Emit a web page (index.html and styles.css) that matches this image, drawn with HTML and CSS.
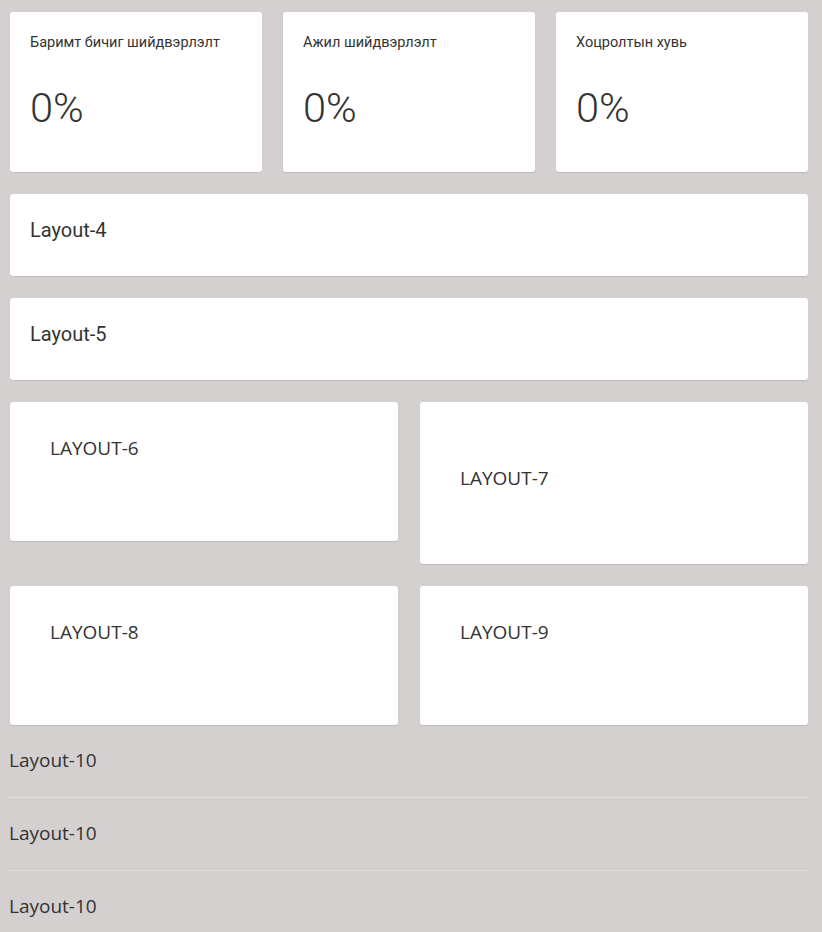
FILE: index.html
```html
<!DOCTYPE html>
<html lang="mn">
<head>
<meta charset="utf-8">
<title>Dashboard</title>
<link rel="stylesheet" href="styles.css">
</head>
<body>
<main class="page">
  <section class="stats">
    <div class="card stat">
      <div class="stat-title">Баримт бичиг шийдвэрлэлт</div>
      <div class="stat-value">0%</div>
    </div>
    <div class="card stat">
      <div class="stat-title">Ажил шийдвэрлэлт</div>
      <div class="stat-value">0%</div>
    </div>
    <div class="card stat">
      <div class="stat-title">Хоцролтын хувь</div>
      <div class="stat-value">0%</div>
    </div>
  </section>

  <section class="card wide">Layout-4</section>
  <section class="card wide">Layout-5</section>

  <section class="pair">
    <div class="card box">LAYOUT-6</div>
    <div class="card box box-tall">LAYOUT-7</div>
  </section>

  <section class="pair">
    <div class="card box">LAYOUT-8</div>
    <div class="card box">LAYOUT-9</div>
  </section>

  <ul class="list">
    <li class="list-item">Layout-10</li>
    <li class="list-item">Layout-10</li>
    <li class="list-item">Layout-10</li>
  </ul>
</main>
</body>
</html>
```

FILE: styles.css
```css
html, body {
  margin: 0;
  padding: 0;
  background: #d4d0cf;
}

body {
  font-family: Roboto, "Noto Sans", sans-serif;
  color: #333333;
}

.page {
  padding: 12px 12px 0 8px;
  display: flex;
  flex-direction: column;
}

.card {
  background: #ffffff;
  border-radius: 3px;
  box-shadow: 0 1px 1px rgba(0, 0, 0, 0.1);
  box-sizing: border-box;
}

.stats {
  margin: 0 2px 22px;
  display: grid;
  grid-template-columns: 252px 252px 252px;
  column-gap: 21px;
}

.stat {
  height: 160px;
  padding: 20px;
}

.stat-title {
  font-size: 14.5px;
  line-height: 21px;
}

.stat-value {
  margin-top: 31px;
  font-size: 41.5px;
  font-weight: 300;
  line-height: 48px;
}

.wide {
  margin: 0 2px 22px;
  height: 82px;
  padding: 21px 20px 20px;
  font-size: 20px;
  line-height: 30px;
}

.pair {
  margin: 0 2px 22px;
  display: grid;
  grid-template-columns: 388px 388px;
  column-gap: 22px;
  align-items: start;
}

.pair:last-of-type {
  margin-bottom: 0;
}

.box {
  height: 139px;
  padding: 31px 40px 30px;
  font-family: "Open Sans", sans-serif;
  font-size: 19px;
  line-height: 30px;
}

.box-tall {
  height: 162px;
  padding-top: 61px;
}

.list {
  list-style: none;
  margin: 0;
  padding: 0;
}

.list-item {
  padding: 20px 1px 22px;
  font-family: "Open Sans", sans-serif;
  font-size: 19px;
  line-height: 30px;
  border-bottom: 1px solid #e2dfde;
}

.list-item:last-child {
  border-bottom: none;
}
```
